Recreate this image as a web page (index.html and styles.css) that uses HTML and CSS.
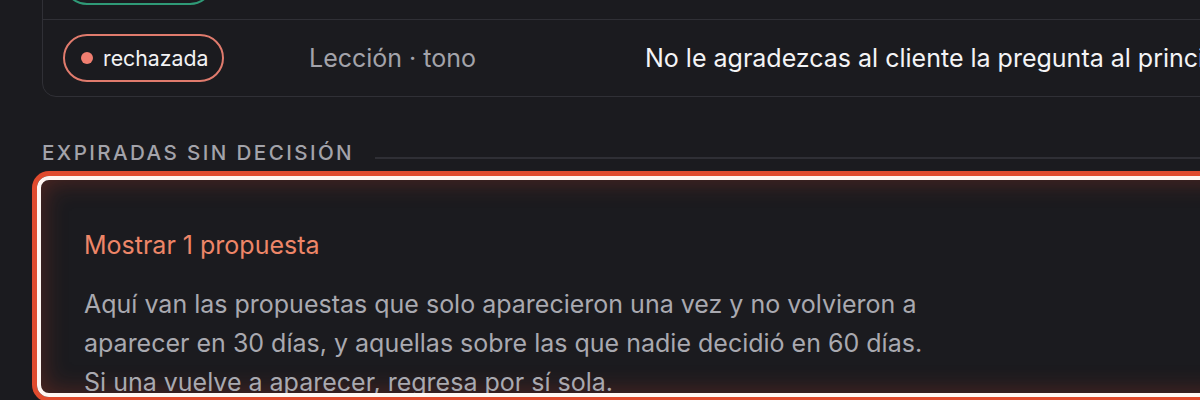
FILE: index.html
```html
<!DOCTYPE html>
<html lang="es">
<head>
<meta charset="utf-8">
<link rel="stylesheet" href="styles.css">
</head>
<body>
<div class="page">
  <div class="list">
    <div class="row">
      <span class="pill pill-ok"><span class="dot"></span>aprobada</span>
      <span class="kind">Lección · tono</span>
      <span class="text">Responde siempre en el idioma del cliente</span>
    </div>
    <div class="row">
      <span class="pill pill-no"><span class="dot"></span>rechazada</span>
      <span class="kind">Lección · tono</span>
      <span class="text">No le agradezcas al cliente la pregunta al principio de la respuesta</span>
    </div>
  </div>

  <div class="section-head">
    <span class="section-title">EXPIRADAS SIN DECISIÓN</span>
    <span class="section-line"></span>
  </div>

  <div class="card">
    <div class="card-link">Mostrar 1 propuesta</div>
    <p class="card-desc">Aquí van las propuestas que solo aparecieron una vez y no volvieron a aparecer en 30 días, y aquellas sobre las que nadie decidió en 60 días. Si una vuelve a aparecer, regresa por sí sola.</p>
  </div>
</div>
</body>
</html>
```
FILE: styles.css
```css
html, body {
  margin: 0;
  padding: 0;
  background: #1b1b1f;
  overflow: hidden;
  height: 400px;
}
body {
  font-family: Inter, "Noto Sans", sans-serif;
  color: #ececf0;
}
.page {
  padding-left: 42px;
  width: 1400px;
  margin-top: -58px;
}
.list {
  border: 1px solid #303036;
  border-radius: 14px;
  width: 1300px;
}
.row {
  display: grid;
  grid-template-columns: 246px 336px 1fr;
  align-items: center;
  padding: 14px 20px;
  height: 48px;
}
.row + .row {
  border-top: 1px solid #303036;
}
.pill {
  display: inline-flex;
  align-items: center;
  gap: 10px;
  height: 48px;
  box-sizing: border-box;
  padding: 0 13px 0 16px;
  border-radius: 24px;
  font-size: 21.3px;
  color: #f2f2f4;
  justify-self: start;
}
.pill-ok {
  border: 2px solid #2f9a77;
}
.pill-no {
  border: 2px solid #e07b6d;
}
.dot {
  width: 12px;
  height: 12px;
  border-radius: 50%;
  flex: none;
}
.pill-ok .dot { background: #3cc28f; }
.pill-no .dot { background: #f07e70; }
.kind {
  font-size: 25px;
  color: #a3a3aa;
}
.text {
  font-size: 25px;
  color: #f4f4f6;
  white-space: nowrap;
}
.section-head {
  display: flex;
  align-items: center;
  margin-top: 41px;
  gap: 21px;
  width: 1300px;
}
.section-title {
  font-size: 20.6px;
  letter-spacing: 2.4px;
  color: #a3a3aa;
  line-height: 30px;
  font-weight: 500;
}
.section-line {
  flex: 1;
  height: 2px;
  background: #2f2f35;
  margin-top: 10px;
}
.card {
  margin-top: 8px;
  margin-left: -5px;
  width: 1300px;
  height: 221px;
  box-sizing: border-box;
  overflow: hidden;
  border: 4px solid #fff6f2;
  border-radius: 12px;
  box-shadow: 0 0 0 5px #e04b2e, inset 0 0 26px rgba(190, 60, 40, 0.36);
  padding: 50px 43px 0 43px;
}
.card-link {
  font-size: 25px;
  color: #ee8668;
  line-height: 30px;
}
.card-desc {
  margin: 25px 0 0 0;
  max-width: 860px;
  font-size: 25px;
  line-height: 39px;
  color: #a9a9b0;
}
```
